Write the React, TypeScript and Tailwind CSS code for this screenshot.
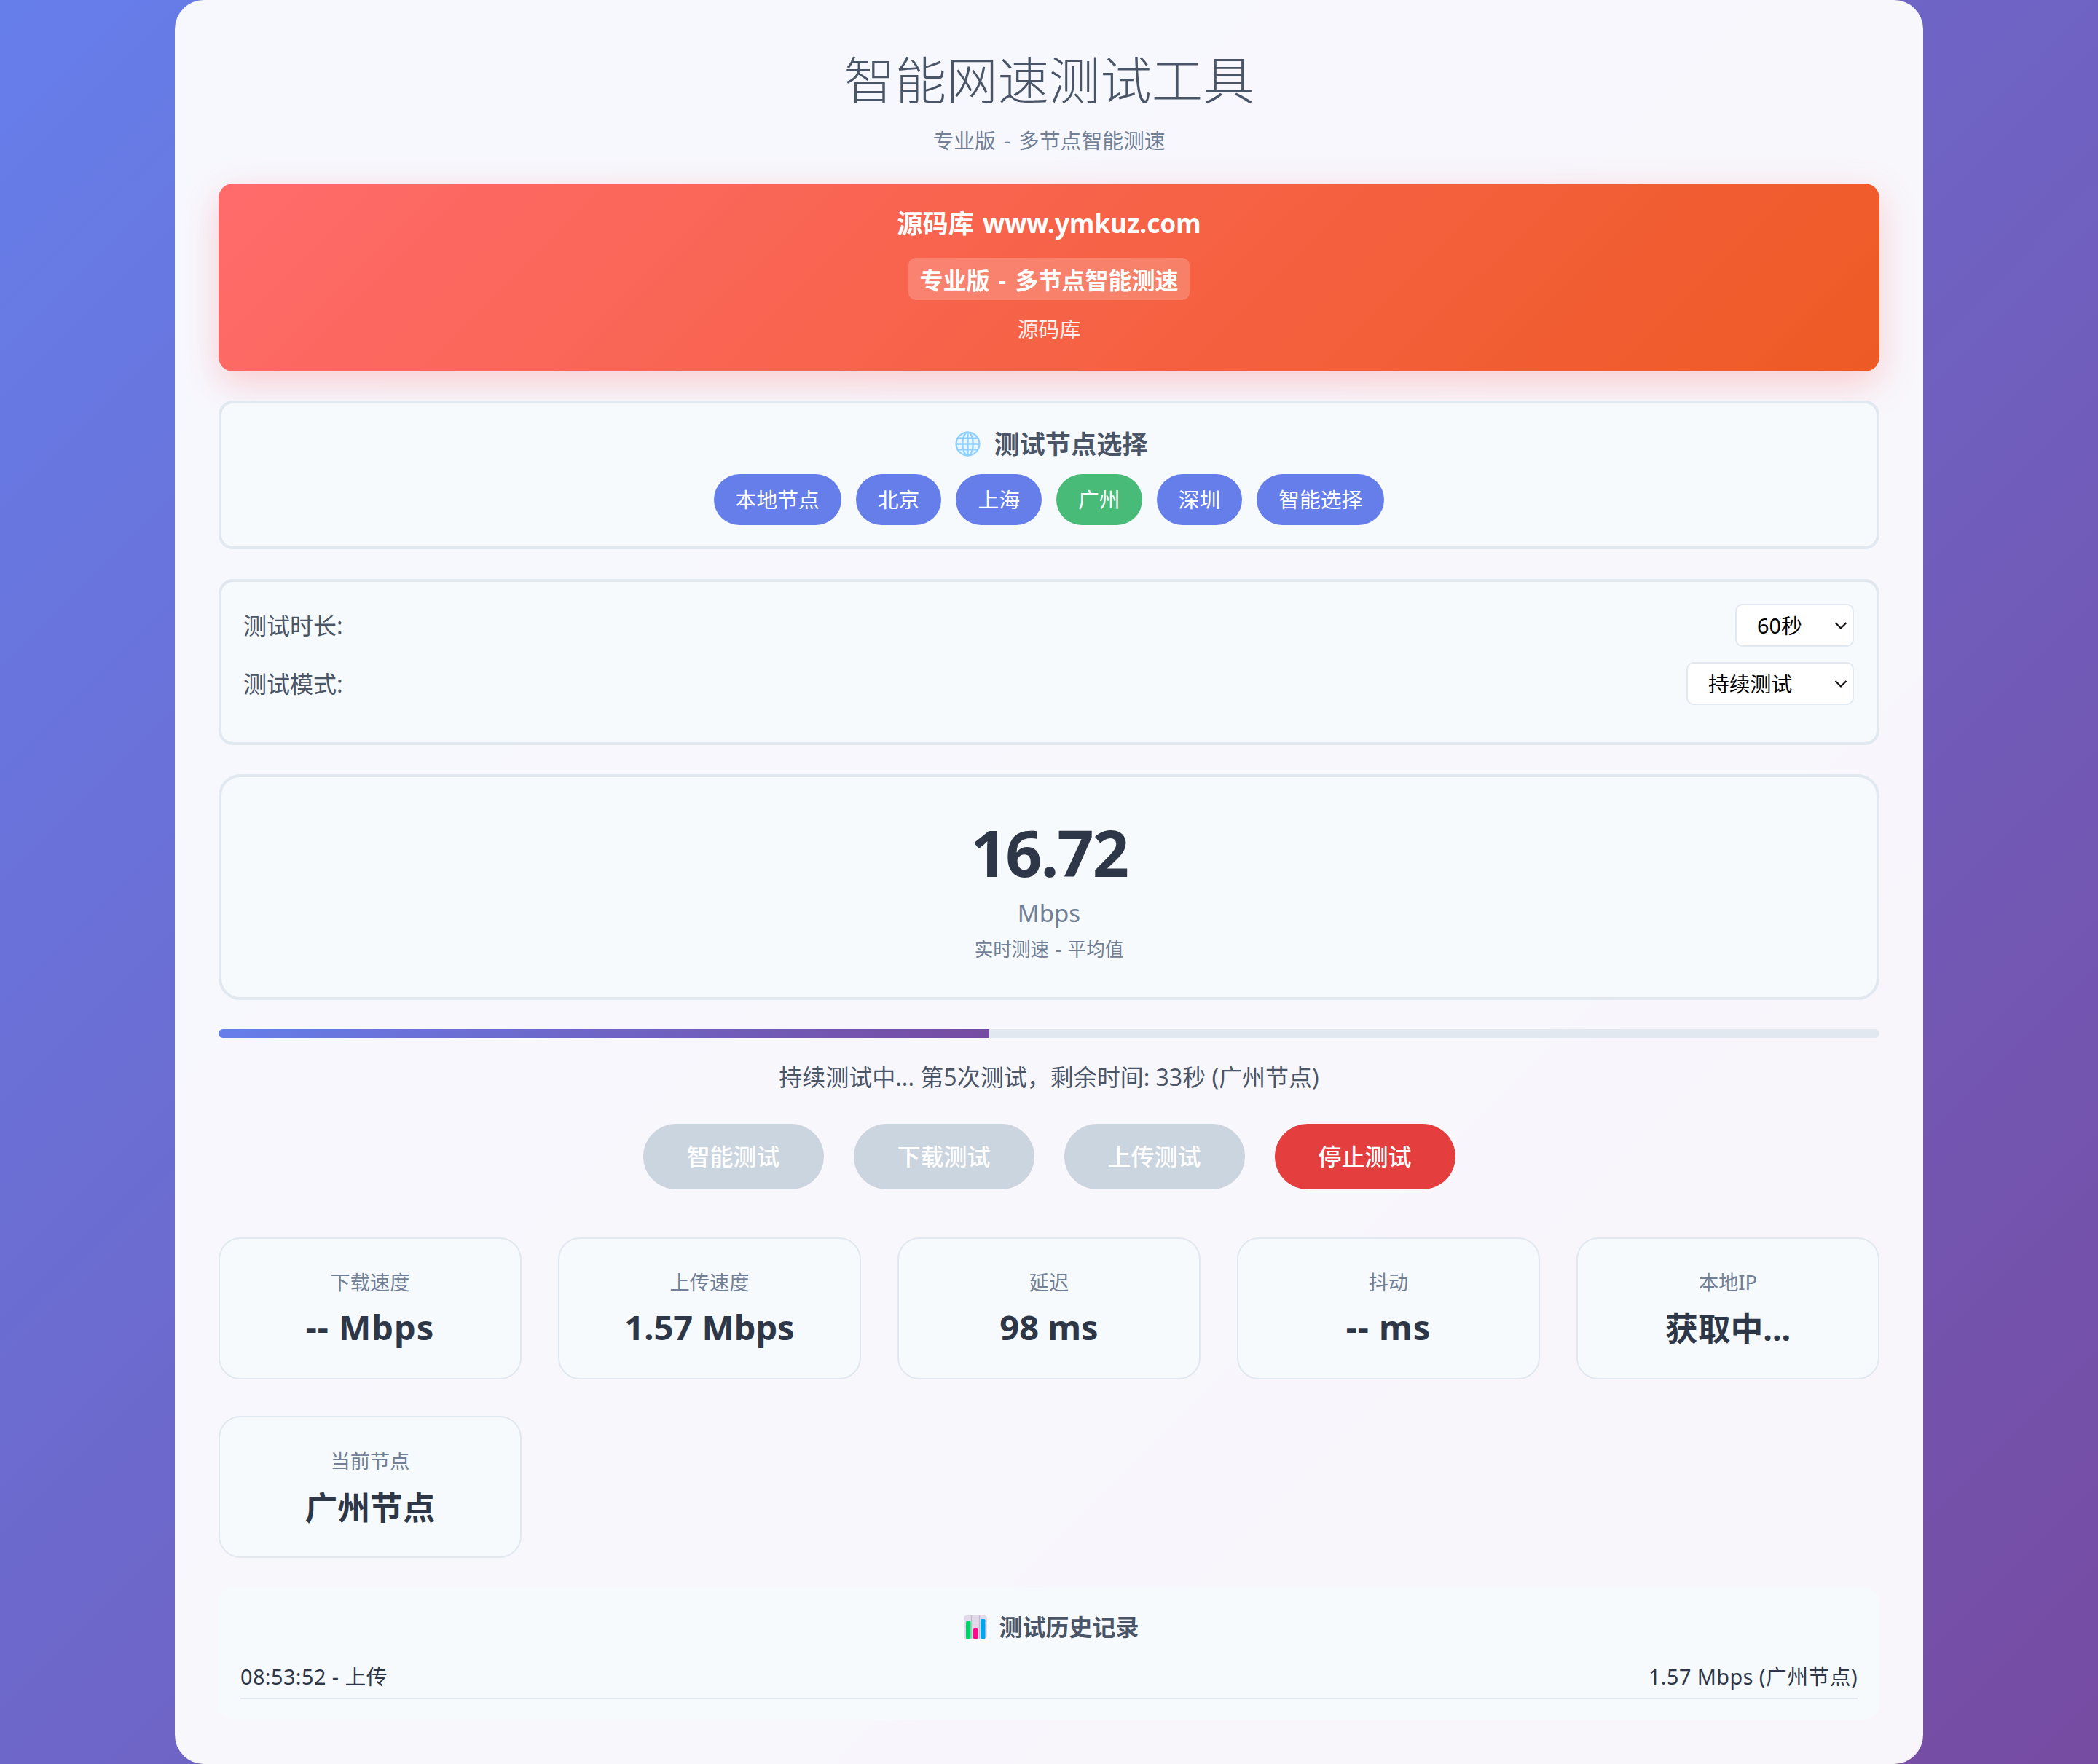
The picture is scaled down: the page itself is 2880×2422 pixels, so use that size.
import React from 'react';

const nodes = [
  { name: '本地节点', active: false },
  { name: '北京', active: false },
  { name: '上海', active: false },
  { name: '广州', active: true },
  { name: '深圳', active: false },
  { name: '智能选择', active: false },
];

// latin values sit a bit larger than the CJK ones in the reference
const stats = [
  { label: '下载速度', value: '-- Mbps', valueClass: 'mt-[10px] text-[47px] tracking-[1px]' },
  { label: '上传速度', value: '1.57 Mbps', valueClass: 'mt-[10px] text-[47px]' },
  { label: '延迟', value: '98 ms', valueClass: 'mt-[10px] text-[47px]' },
  { label: '抖动', value: '-- ms', valueClass: 'mt-[10px] text-[47px] tracking-[1px]' },
  { label: '本地IP', value: '获取中...', valueClass: 'mt-[11px] text-[44.8px]' },
  { label: '当前节点', value: '广州节点', valueClass: 'mt-[12px] text-[44.8px]' },
];

const GlobeIcon = () => (
  <svg viewBox="0 0 36 36" className="w-[35px] h-[35px] shrink-0" fill="none" stroke="#8ed0ff" strokeWidth="2.4">
    <circle cx="18" cy="18" r="16.4" fill="#e9f6ff" />
    <ellipse cx="18" cy="18" rx="7.5" ry="16.4" />
    <path d="M18 1.6v32.8M1.6 18h32.8M4 10h28M4 26h28" />
  </svg>
);

const ChartIcon = () => (
  <svg viewBox="0 0 32 32" className="w-[32px] h-[32px] shrink-0">
    <rect width="32" height="32" rx="4" fill="#e2d9ea" />
    <path d="M10.5 0v32M21.5 0v32M0 10.5h32M0 21.5h32" stroke="#c1bac8" strokeWidth="1.2" />
    <rect x="3" y="8" width="6.5" height="24" rx="1.5" fill="#00d26a" />
    <rect x="13" y="17" width="6.5" height="15" rx="1.5" fill="#ff0a8a" />
    <rect x="23" y="5" width="6.5" height="27" rx="1.5" fill="#00a6ed" />
  </svg>
);

const Chevron = () => (
  <svg viewBox="0 0 18 11" className="absolute right-[9px] top-1/2 -translate-y-1/2 w-[18px] h-[11px] pointer-events-none" fill="none" stroke="#111" strokeWidth="2.2">
    <path d="M1.5 1.5 9 9l7.5-7.5" />
  </svg>
);

const ControlRow = ({ label, widthClass, options }: { label: string; widthClass: string; options: string[] }) => (
  <div className="flex items-center justify-between mb-[21px]">
    <label className="text-[32px] leading-[46px] text-[#4a5568]">{label}</label>
    <div className={`relative ${widthClass}`}>
      <select className="appearance-none w-full h-[59px] pl-[28px] bg-white border-2 border-[#e2e8f0] rounded-[10px] text-[28.8px] text-black outline-none">
        {options.map((o) => (
          <option key={o}>{o}</option>
        ))}
      </select>
      <Chevron />
    </div>
  </div>
);

const App: React.FC = () => {
  return (
    <div className="min-h-[2422px] bg-[linear-gradient(135deg,#667eea_0%,#764ba2_100%)] font-['Noto_Sans','Noto_Sans_CJK_SC',sans-serif]">
      <div className="w-[2400px] h-[2422px] mx-auto px-[60px] pt-[59px] bg-white/95 rounded-[40px]">
        {/* Header */}
        <div className="text-center">
          <h1 className="text-[70.4px] leading-[102px] font-light text-[#4a5568]">智能网速测试工具</h1>
          <p className="mt-[11px] text-[28.8px] leading-[42px] text-[#718096] [word-spacing:3.5px]">专业版 - 多节点智能测速</p>
        </div>

        {/* Banner */}
        <div className="mt-[38px] h-[258px] pt-[29px] rounded-[20px] text-center text-white bg-[linear-gradient(135deg,#ff6b6b,#ee5a24)] shadow-[0_16px_50px_rgba(255,107,107,0.3)]">
          <div className="text-[35.2px] leading-[51px] font-bold [word-spacing:3px]">源码库 www.ymkuz.com</div>
          <div className="mt-[22px] inline-block px-[16px] pt-[8px] pb-[4px] rounded-[10px] bg-white/20 text-[32px] leading-[46px] font-bold [word-spacing:4px]">
            专业版 - 多节点智能测速
          </div>
          <div className="mt-[19px] text-[28.8px] leading-[42px] opacity-90">源码库</div>
        </div>

        {/* Node selector */}
        <div className="mt-[40px] px-[30px] pt-[30px] pb-[29px] rounded-[20px] border-4 border-[#e2e8f0] bg-[#f7fafc]">
          <div className="flex items-center justify-center gap-[18px] pl-[7px] text-[35.2px] leading-[51px] font-bold text-[#4a5568]">
            <GlobeIcon />
            <span>测试节点选择</span>
          </div>
          <div className="mt-[16px] flex justify-center gap-[20px]">
            {nodes.map((n) => (
              <button
                key={n.name}
                className={`h-[70px] px-[30px] rounded-full text-[28.8px] text-white ${n.active ? 'bg-[#48bb78]' : 'bg-[#667eea]'}`}
              >
                {n.name}
              </button>
            ))}
          </div>
        </div>

        {/* Controls */}
        <div className="mt-[41px] h-[228px] pl-[30px] pr-[31px] pt-[30px] rounded-[20px] border-4 border-[#e2e8f0] bg-[#f7fafc]">
          <ControlRow label="测试时长:" widthClass="w-[163px]" options={['60秒', '30秒', '120秒']} />
          <ControlRow label="测试模式:" widthClass="w-[230px]" options={['持续测试', '单次测试']} />
        </div>

        {/* Speed display */}
        <div className="mt-[40px] h-[310px] pt-[43px] rounded-[30px] border-4 border-[#e2e8f0] bg-[#f7fafc] text-center">
          <div className="text-[88px] leading-[120px] font-bold tracking-[-2px] text-[#2d3748]">16.72</div>
          <div className="text-[33px] leading-[48px] text-[#718096]">Mbps</div>
          <div className="mt-[6px] text-[25.6px] leading-[39px] text-[#718096] [word-spacing:2px]">实时测速 - 平均值</div>
        </div>

        {/* Progress */}
        <div className="mt-[40px] h-[12px] rounded-[6px] bg-[#e2e8f0] overflow-hidden">
          <div className="h-full w-[46.4%] bg-[linear-gradient(90deg,#667eea,#764ba2)]" />
        </div>
        <div className="mt-[31px] text-center text-[32px] leading-[46px] text-[#4a5568]">
          持续测试中... 第5次测试，剩余时间: 33秒 (广州节点)
        </div>

        {/* Buttons */}
        <div className="mt-[41px] flex justify-center gap-[41px]">
          {['智能测试', '下载测试', '上传测试'].map((b) => (
            <button key={b} className="w-[248px] h-[90px] rounded-full bg-[#cbd5e0] text-[32px] font-medium text-white">
              {b}
            </button>
          ))}
          <button className="w-[248px] h-[90px] rounded-full bg-[#e53e3e] text-[32px] font-medium text-white">停止测试</button>
        </div>

        {/* Stats */}
        <div className="mt-[66px] grid grid-cols-5 gap-[50px]">
          {stats.map((s) => (
            <div key={s.label} className="h-[195px] pt-[40px] rounded-[30px] border-2 border-[#e2e8f0] bg-[#f7fafc] text-center">
              <div className="text-[27.2px] leading-[39px] text-[#718096]">{s.label}</div>
              <div className={`leading-[65px] font-bold text-[#2d3748] ${s.valueClass}`}>{s.value}</div>
            </div>
          ))}
        </div>

        {/* History */}
        <div className="mt-[41px] h-[181px] px-[30px] pt-[31px] rounded-[20px] bg-[#f7fafc]">
          <div className="flex items-center justify-center gap-[16px] pl-[7px] text-[32px] leading-[46px] font-bold text-[#4a5568]">
            <ChartIcon />
            <span>测试历史记录</span>
          </div>
          <div className="mt-[24px] pb-[8px] flex justify-between border-b-2 border-[#e2e8f0] text-[28.8px] leading-[42px] tracking-[0.45px] text-[#2d3748]">
            <span>08:53:52 - 上传</span>
            <span>1.57 Mbps (广州节点)</span>
          </div>
        </div>
      </div>
    </div>
  );
};

export default App;
